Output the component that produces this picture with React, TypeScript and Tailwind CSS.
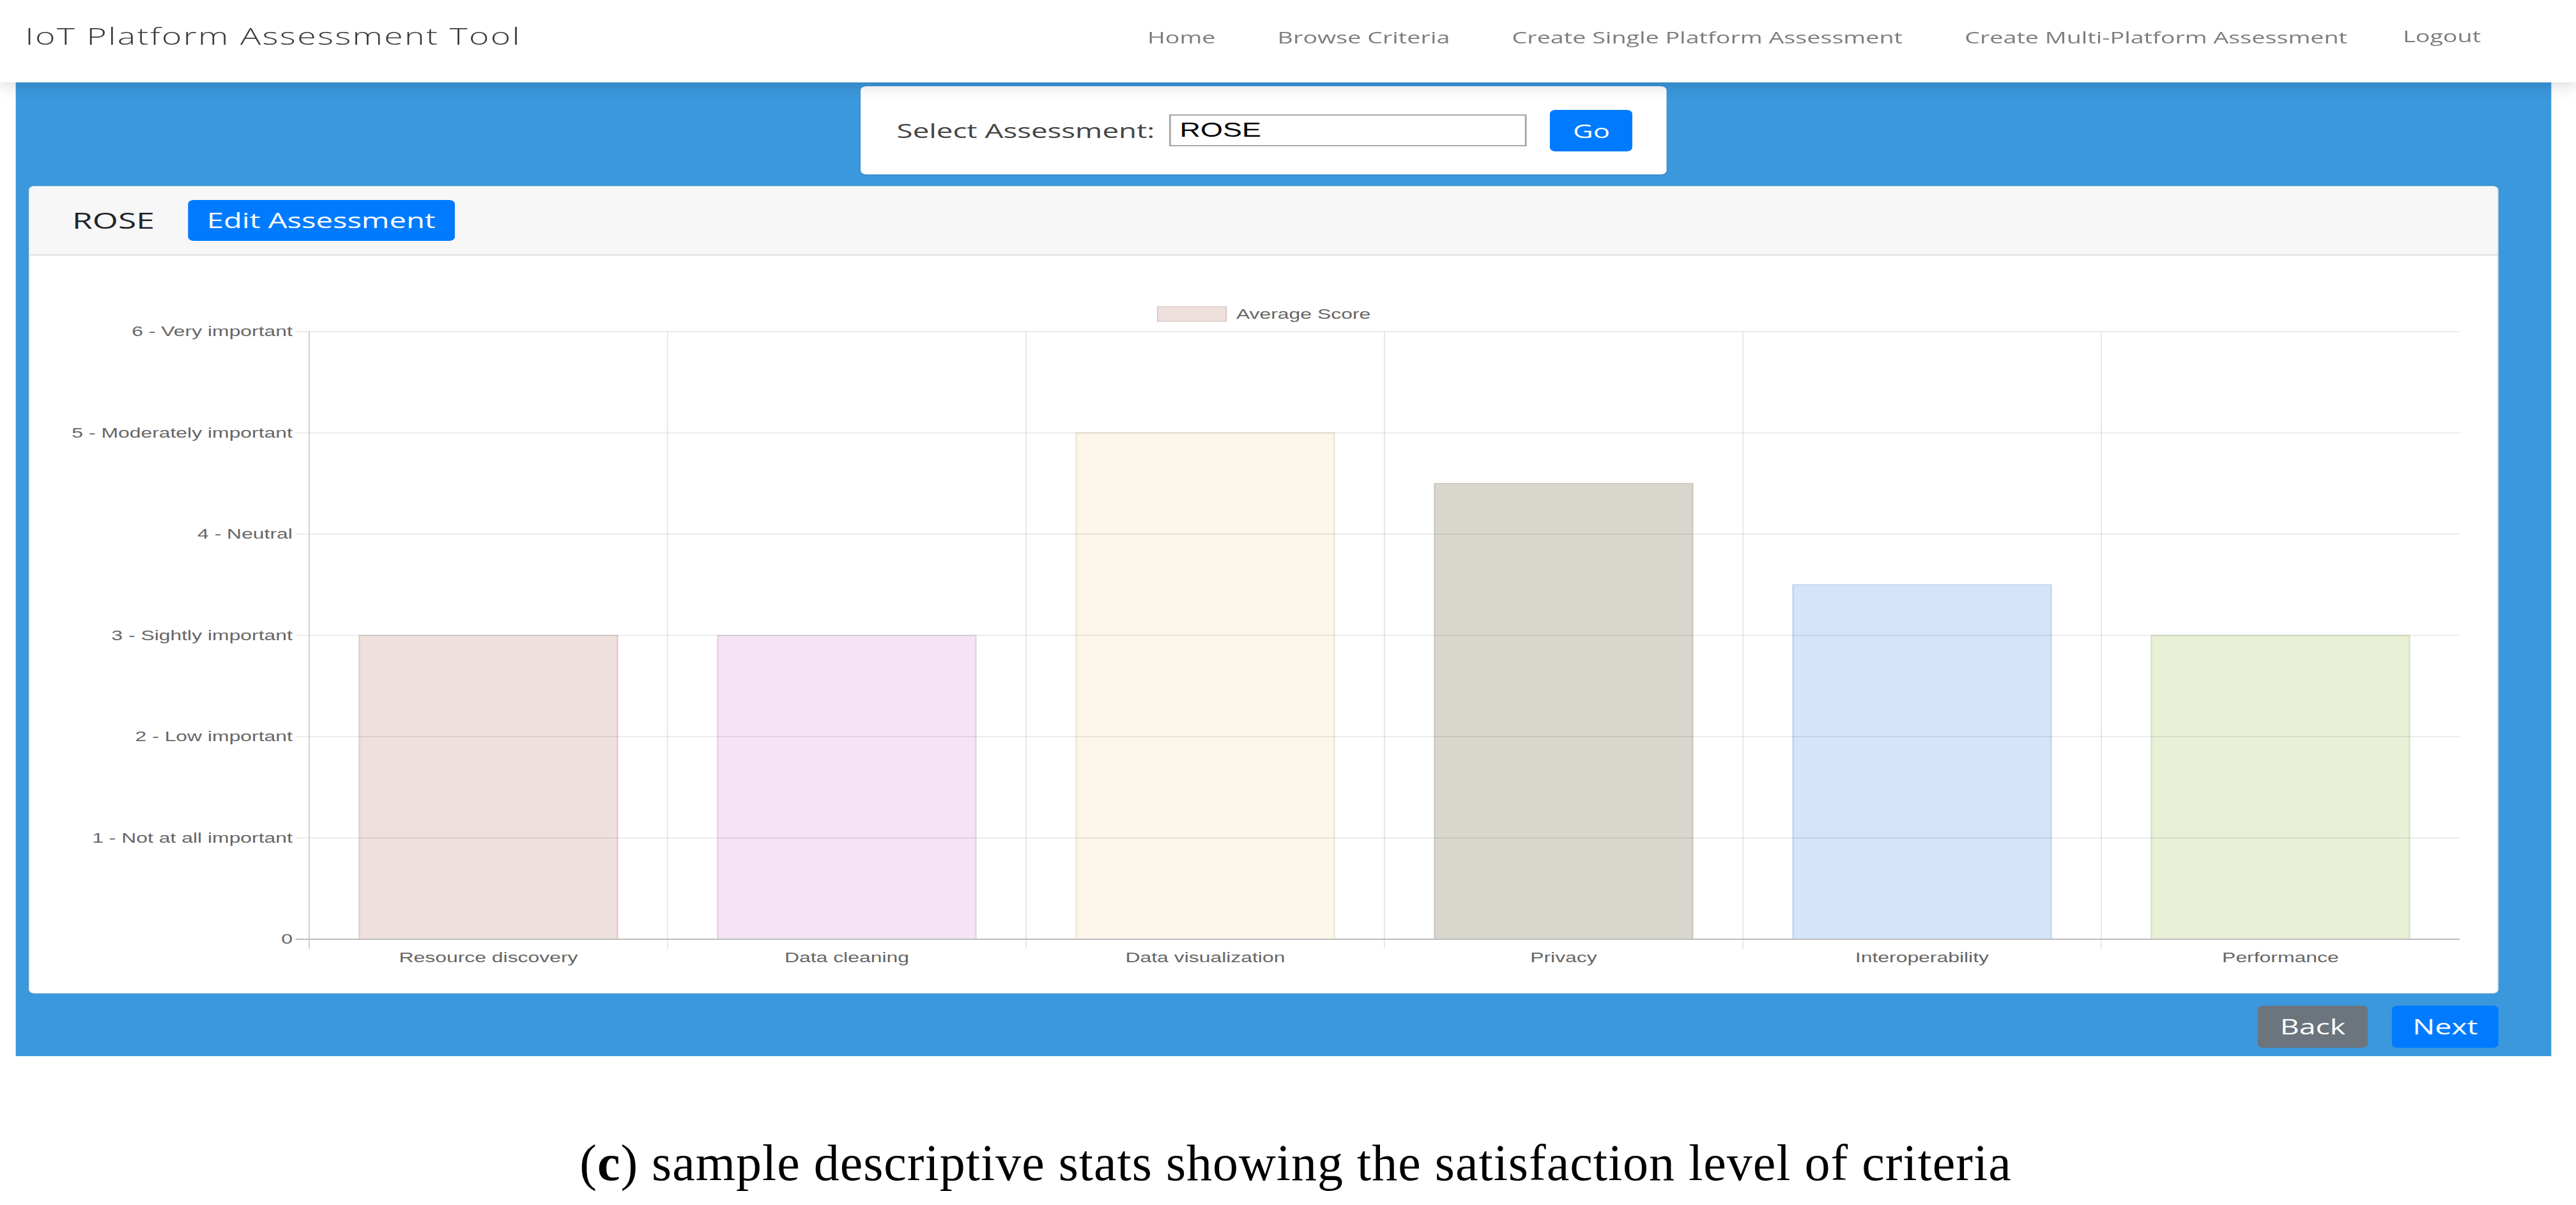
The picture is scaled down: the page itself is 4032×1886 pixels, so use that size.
import React from 'react';

// Chart values and colours (Chart.js-style bar chart, drawn as SVG)
const criteria = [
  { label: 'Resource discovery', value: 3, fill: '#eee0dc', stroke: '#dccbc6' },
  { label: 'Data cleaning', value: 3, fill: '#f4e4f5', stroke: '#e2cde5' },
  { label: 'Data visualization', value: 5, fill: '#fdf6eb', stroke: '#efe3d0' },
  { label: 'Privacy', value: 4.5, fill: '#d9d6cd', stroke: '#cbc7bc' },
  { label: 'Interoperability', value: 3.5, fill: '#d5e4f9', stroke: '#bfd1ea' },
  { label: 'Performance', value: 3, fill: '#e8f0d6', stroke: '#d5e0bd' },
];

const yTicks = [
  '0',
  '1 - Not at all important',
  '2 - Low important',
  '3 - Sightly important',
  '4 - Neutral',
  '5 - Moderately important',
  '6 - Very important',
];

const navLinks = [
  'Home',
  'Browse Criteria',
  'Create Single Platform Assessment',
  'Create Multi-Platform Assessment',
];

const sans = "font-['Open_Sans','Noto_Sans',sans-serif]";

function ScoreChart() {
  const W = 2664;
  const H = 1154;
  const plotL = 301.8;
  const plotR = 2623.1;
  const cat = (plotR - plotL) / criteria.length;
  const y0 = 1070;
  const unit = 158.5;
  const y = (v: number) => y0 - unit * v;
  const font = 'Liberation Sans, Arial, sans-serif';

  return (
    <svg width={W} height={H} viewBox={`0 0 ${W} ${H}`} className="block">
      {/* legend */}
      <rect x={1217.6} y={80} width={74} height={23} fill="#eee0dc" stroke="#dccbc6" strokeWidth={1.5} />
      <text x={1302.4} y={99} fontSize={22} fill="#666" fontFamily={font}>
        Average Score
      </text>

      {/* vertical grid lines */}
      {criteria.map((_, i) =>
        i === 0 ? null : (
          <line
            key={`v${i}`}
            x1={plotL + cat * i}
            x2={plotL + cat * i}
            y1={y(6)}
            y2={1085}
            stroke="#e8e8e8"
            strokeWidth={1.4}
          />
        )
      )}

      {/* bars */}
      {criteria.map((c, i) => {
        const bw = cat * 0.72;
        const bx = plotL + cat * i + cat * 0.14;
        return (
          <rect
            key={c.label}
            x={bx}
            y={y(c.value)}
            width={bw}
            height={y0 - y(c.value)}
            fill={c.fill}
            stroke={c.stroke}
            strokeWidth={1.5}
          />
        );
      })}

      {/* horizontal grid lines + tick labels */}
      {yTicks.map((t, v) =>
        v === 0 ? null : (
          <g key={t}>
            <line x1={287} x2={plotR} y1={y(v)} y2={y(v)} stroke="rgba(0,0,0,0.08)" strokeWidth={2} />
            <text
              x={283.8}
              y={y(v) + 7.5}
              fontSize={22}
              fill="#666"
              textAnchor="end"
              fontFamily={font}
            >
              {t}
            </text>
          </g>
        )
      )}
      <text x={283.8} y={y0 + 7.5} fontSize={22} fill="#666" textAnchor="end" fontFamily={font}>
        0
      </text>

      {/* axes */}
      <line x1={plotL} x2={plotL} y1={y(6)} y2={1085} stroke="#cfcfcf" strokeWidth={1.4} />
      <line x1={287} x2={plotR} y1={y0} y2={y0} stroke="#bdbdbd" strokeWidth={2} />

      {/* category labels */}
      {criteria.map((c, i) => (
        <text
          key={`l${c.label}`}
          x={plotL + cat * i + cat / 2}
          y={1106}
          fontSize={22}
          fill="#666"
          textAnchor="middle"
          fontFamily={font}
        >
          {c.label}
        </text>
      ))}
    </svg>
  );
}

export default function App() {
  return (
    <div className="min-h-screen bg-white">
      {/* the screenshot is stretched horizontally, so the page is drawn narrow and scaled */}
      <div className="w-[2781px] origin-top-left scale-x-[1.45]">
        {/* Navbar */}
        <nav className="relative z-10 flex h-[129px] items-start bg-white pl-[27px] pr-[103px] shadow-[0_6px_18px_rgba(0,0,0,0.14)]">
          <span className={`${sans} mt-[38px] text-[37px] font-light leading-[36px] tracking-[1.6px] text-[#3a3a3a]`}>
            IoT Platform Assessment Tool
          </span>
          <ul className={`${sans} ml-auto mt-[45px] flex items-start gap-[67px] text-[26px] leading-[26px] text-[#7d7d7d]`}>
            {navLinks.map((l) => (
              <li key={l}>{l}</li>
            ))}
            <li className="-ml-[7px] -mt-[2px]">Logout</li>
          </ul>
        </nav>

        {/* Blue content area */}
        <main className="ml-[17px] w-[2737px] bg-[#3b98dc] pb-[13px] pl-[14px] pr-[57px] pt-[6px]">
          {/* Select assessment */}
          <div className="mx-auto flex h-[138px] w-[870px] items-center rounded-[6px] bg-white pl-[39px] shadow-[0_1px_2px_rgba(0,0,0,0.15)]">
            <label className={`${sans} text-[31.5px] leading-none text-[#444]`}>Select Assessment:</label>
            <input
              readOnly
              value="ROSE"
              className="ml-[16px] h-[50px] w-[386px] border-2 border-[#a9a9a9] bg-white px-[9px] font-['Liberation_Sans',Arial,sans-serif] text-[31px] text-black outline-none"
            />
            <button className={`${sans} ml-[25px] h-[65px] w-[89px] rounded-[6px] bg-[#007bff] text-[30px] text-white`}>
              Go
            </button>
          </div>

          {/* Chart card */}
          <section className="mt-[18px] overflow-hidden rounded-[6px] border border-[#dcdcdc] bg-white">
            <header className="flex h-[108px] items-center border-b-2 border-[#dedede] bg-[#f7f7f7] pl-[46px]">
              <span className={`${sans} text-[35.5px] leading-none text-[#212529]`}>ROSE</span>
              <button className={`${sans} ml-[36px] h-[64px] w-[288px] rounded-[6px] bg-[#007bff] text-[32.5px] text-white`}>
                Edit Assessment
              </button>
            </header>
            <div className="h-[1154px]">
              <ScoreChart />
            </div>
          </section>

          {/* Footer buttons */}
          <div className="mt-[19px] flex justify-end gap-[26px]">
            <button className={`${sans} h-[66px] w-[119px] rounded-[6px] bg-[#6c757d] text-[32px] text-white`}>
              Back
            </button>
            <button className={`${sans} h-[66px] w-[115px] rounded-[6px] bg-[#007bff] text-[32px] text-white`}>
              Next
            </button>
          </div>
        </main>
      </div>

      {/* Figure caption */}
      <p className="mt-[127px] pl-[24px] text-center font-['Liberation_Serif','Times_New_Roman',serif] text-[80px] leading-[80px] tracking-[1px] text-black">
        (<span className="font-bold">c</span>) sample descriptive stats showing the satisfaction level of criteria
      </p>
    </div>
  );
}
